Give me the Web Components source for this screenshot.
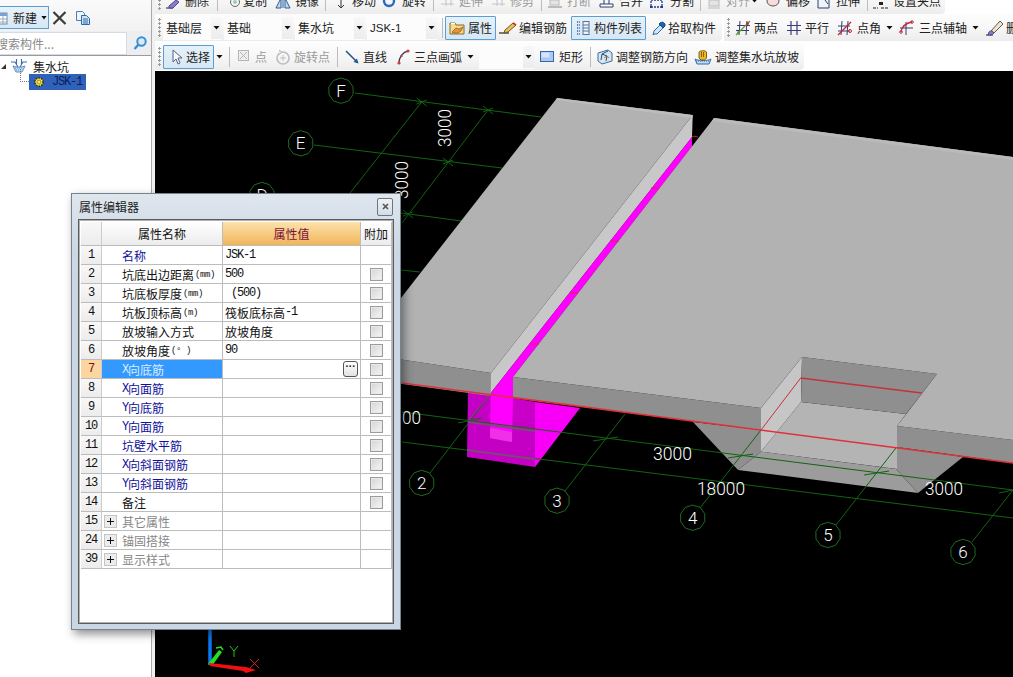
<!DOCTYPE html>
<html lang="zh"><head><meta charset="utf-8"><title>集水坑</title>
<style>
html,body{margin:0;padding:0;background:#fff;overflow:hidden}
body{font:12px "Noto Sans CJK SC","Liberation Sans",sans-serif;color:#222}
</style></head><body>
<cad-app></cad-app>
<script>
const ICONS={
 doc:'<rect x="1" y="3" width="12" height="11" fill="#fff" stroke="#6c8db5"/><rect x="1" y="3" width="12" height="3" fill="#7aa3d3"/><path d="M1 9h12M1 12h12M5 6v8M9 6v8" stroke="#9ab" fill="none"/>',
 del:'<path d="M1.500 2l12 12M13.500 2l-12 12" stroke="#3c3c3c" stroke-width="2.200" fill="none"/>',
 copy:'<path d="M1.500 1.500h6l2 2v7h-8z" fill="#eef4fb" stroke="#4a7fb5"/><path d="M6.500 5.500h5l3 3v6h-8z" fill="#cfe2f5" stroke="#2e6aa8"/><path d="M8 9h5M8 11h5M8 13h5" stroke="#2e6aa8"/>',
 search:'<circle cx="9.500" cy="6.500" r="4.200" fill="#d8eaf8" stroke="#3b8fd0" stroke-width="2"/><path d="M6.500 9.500L2.500 14" stroke="#3b8fd0" stroke-width="2.400"/>',
 pit:'<path d="M0 4h4l3 5M16 4h-4l-3 5M5.500 1v5M10.500 1v5" fill="none" stroke="#3d6db0" stroke-width="1.100"/><path d="M2 8c3 1.500 9 1.500 12 0l-3 6H5z" fill="#c8def4" stroke="#5f8cc8"/><path d="M4 10h8M5 12h6" stroke="#5f8cc8" stroke-dasharray="1 1"/>',
 gear:'<circle cx="8" cy="8" r="5.500" fill="#f4e23c" stroke="#2c2c10" stroke-dasharray="2 1.500" stroke-width="2"/><circle cx="8" cy="8" r="2.500" fill="#fdf070" stroke="#2c2c10" stroke-width=".6"/>',
 props:'<path d="M1 3h5l1 2h8v9H1z" fill="#f4d98e" stroke="#8a6a28"/><path d="M3 12l4-4 3 1 4-2-2 4-3 2H4z" fill="#e2953a" stroke="#8a5a18" stroke-width=".7"/><path d="M2 3.500h4" stroke="#fff"/>',
 edit:'<path d="M0 13h10" stroke="#222" stroke-width="1.200"/><path d="M6 10l8-7 3 2-8 7-4 1z" fill="#e8c060" stroke="#7a5518"/><path d="M14 3l3 2" stroke="#c33" stroke-width="1.600"/>',
 list:'<path d="M2 2h3M2 5h3M2 8h3M2 11h3M2 14h3" stroke="#2c5fa5" stroke-width="1.500" stroke-dasharray="1.200 1"/><rect x="8" y="1.500" width="6" height="13" fill="#eef3fa" stroke="#54749c"/><path d="M8 5h6M8 8h6M8 11h6" stroke="#54749c"/>',
 pick:'<path d="M3 14l-1 1 1-4 6-6 3 3-6 6z" fill="#cfe5f8" stroke="#2d6ab0"/><path d="M8 4l4 4 2-2 0-2-1-1-2-1-2 1z" fill="#1e63b0" stroke="#174a85"/>',
 two:'<path d="M2 5.500h13M1 10.500h13M5 1l-1 14M12 1l-1 14" stroke="#3a3a70" fill="none"/><path d="M1 15L15 1" stroke="#5c9a3a" stroke-width="1.300"/><circle cx="3.500" cy="12.500" r="1.500" fill="#5c9a3a"/><circle cx="12.500" cy="3.500" r="1.500" fill="#b33"/>',
 par:'<path d="M1 5.500h14M1 10.500h14M5 1v14M11 1v14" stroke="#3a3a80" fill="none" stroke-width="1.200"/>',
 ang:'<path d="M1 6h12M1 11h12M5 1L4 15M11 1l-1 14" stroke="#3a3a70" fill="none"/><path d="M1 15L14 2" stroke="#c0283a" stroke-width="1.200"/><circle cx="13" cy="11" r="1.500" fill="none" stroke="#c0283a"/>',
 aux:'<path d="M7 2v13M1 8h13" stroke="#3a3a70"/><path d="M2 12C3 6 7 3 13 2" fill="none" stroke="#c0283a" stroke-width="1.300"/><circle cx="2" cy="12" r="1.300" fill="none" stroke="#c0283a"/><circle cx="13" cy="2" r="1.300" fill="none" stroke="#c0283a"/>',
 brush:'<path d="M0 15h7" stroke="#222"/><path d="M5 11L14 1l3 3-9 9z" fill="#e9e4d8" stroke="#6a5a3a"/><path d="M3 12c2-2 4-1 5 1l-3 2H2z" fill="#8a78c8" stroke="#55458a"/>',
 sel:'<path d="M4 1v12l3-3 2 5 2-1-2-5h4z" fill="#f4f6fa" stroke="#59627a"/>',
 pt:'<rect x="1.500" y="1.500" width="10" height="10" fill="#eee" stroke="#b4b4b4"/><path d="M3 3l7 7M10 3l-7 7" stroke="#b4b4b4"/>',
 rot:'<circle cx="8" cy="9" r="6" fill="none" stroke="#bdbdbd" stroke-width="1.600"/><path d="M8 6v6M5 9h6" stroke="#bdbdbd"/><path d="M4 1l3 2-3 3" fill="#ddd" stroke="#bdbdbd"/>',
 line:'<path d="M1 2l11 11" stroke="#23588f" stroke-width="1.600"/><path d="M13.500 14.500l-5-1.500 3.500-3.500z" fill="#23588f"/>',
 arc:'<path d="M2 14C2 8 6 3 11 2" fill="none" stroke="#35406a" stroke-width="1.400"/><circle cx="2" cy="14" r="1.600" fill="#d04030"/><circle cx="11" cy="2" r="1.600" fill="#d04030"/><circle cx="4.500" cy="7" r="1.200" fill="#d04030"/>',
 rect:'<rect x=".5" y="2.500" width="13" height="10" fill="#a9c8f2" stroke="#3a64a8"/><rect x="1.500" y="3.500" width="8" height="5" fill="#d4e4fa"/>',
 adj:'<path d="M1 4l10-3 4 3v8l-10 3-4-3z" fill="#d9e6f2" stroke="#3d6d96"/><path d="M5 5l5 2-1 5M5 5l-1 6M11 2l-6 3" fill="none" stroke="#23507a"/><path d="M7 9c2-2 4-2 5 0" fill="none" stroke="#a06a20"/>',
 hand:'<path d="M0 10c3 2 13 2 16 0l-2 5H2z" fill="#bcd8f2" stroke="#2f6cab"/><path d="M1 12h14" stroke="#2f6cab" stroke-dasharray="1 1"/><path d="M4 9V3l1.500-1L7 2l1.500-.5L10 2l1.500 1v6l-2 2H6z" fill="#e8b82a" stroke="#85620f"/><path d="M6.500 3v5M8.500 3v5" stroke="#85620f"/>',
 r1del:'<path d="M0 7h7" stroke="#222"/><path d="M3 5l7-6 3 2-6 6H3z" fill="#8a78c8" stroke="#55458a"/>',
 r1copy:'<circle cx="5" cy="1" r="4.500" fill="none" stroke="#666"/><circle cx="5" cy="1" r="2" fill="#9cb"/>',
 r1mir:'<path d="M1 7l4-8h1v8zM15 7l-4-8h-1v8zM8 -1v8" fill="#bcd8f2" stroke="#2f5e9a"/>',
 r1mov:'<path d="M6 -1v8M3 4l3 3 3-3" stroke="#333" fill="none"/>',
 r1rot:'<circle cx="6" cy="0" r="5" fill="none" stroke="#2c6bc0" stroke-width="2.400"/>',
 r1dis:'<path d="M1 3h13M6 -1v6M11 -1v6" stroke="#c4c4c4" fill="none"/>',
 r1brk:'<path d="M0 6h14" stroke="#bbb" stroke-width="2"/><rect x="2" y="-1" width="9" height="5" fill="#e5e5e5" stroke="#bbb"/>',
 r1mrg:'<path d="M1 3h13v3H1z" fill="#fff" stroke="#2d3f6a"/><path d="M5 -1v4M10 -1v4" stroke="#2d3f6a"/>',
 r1spl:'<rect x="1" y="-1" width="11" height="7" fill="none" stroke="#1d3a9a" stroke-dasharray="2 1" stroke-width="1.300"/><rect x="0" y="5" width="2" height="2" fill="#1d3a9a"/><rect x="11" y="5" width="2" height="2" fill="#1d3a9a"/>',
 r1ali:'<rect x="1" y="-1" width="10" height="6" fill="#e4e4e4" stroke="#bbb"/><path d="M0 7h12" stroke="#bbb"/>',
 r1off:'<ellipse cx="7" cy="0" rx="6" ry="5" fill="#f6dcdc" stroke="#555"/>',
 r1str:'<path d="M1 -1v8h11V-1" fill="#eef4fb" stroke="#2d3f6a"/><path d="M8 -1l3 4" stroke="#2d3f6a"/>',
 r1grp:'<path d="M0 7h5M8 7h8" stroke="#222" stroke-dasharray="3 1"/><rect x="6" y="1" width="4" height="3" fill="#222"/>'
};
class Base extends HTMLElement{
 mount(html){if(!this.shadowRoot)this.attachShadow({mode:'open'});this.shadowRoot.innerHTML=html}
}
customElements.define('tool-grip',class extends Base{connectedCallback(){this.mount(`<style>:host{display:block;flex:none;width:5px;height:20px;background:radial-gradient(circle at 1.500px 1.500px,#9a9a9a 1px,transparent 1.200px) 0 0/5px 4px repeat-y}</style>`)}});
customElements.define('tool-sep',class extends Base{connectedCallback(){this.mount(`<style>:host{display:block;flex:none;width:1px;height:20px;background:#bcbcbc}</style>`)}});
customElements.define('tool-arrow',class extends Base{connectedCallback(){this.mount(`<style>:host{display:block;flex:none;width:7px;height:4px;background:#111;clip-path:polygon(0 0,100% 0,50% 100%)}</style>`)}});
customElements.define('tool-item',class extends Base{connectedCallback(){
 const g=n=>this.getAttribute(n);
 const iw=g('iw')||16,nm=g('i')||'',raw=ICONS[nm]||'';
 const ic=nm.startsWith('r1')?`<g transform="translate(0,8)">${raw}</g>`:raw;
 this.mount(`<style>
 :host{display:flex;flex:none;align-items:center;box-sizing:border-box;height:24px;white-space:nowrap;color:#222;font:12px "Noto Sans CJK SC",sans-serif;border:1px solid transparent}
 :host([hl]){border-color:#5a9fd4;background:linear-gradient(#e6f1f9,#d6e7f4);border-radius:1px}
 :host([dis]){color:#9a9a9a}
 svg{flex:none;display:block;overflow:visible;margin-left:-1px}
 span{margin-left:var(--gap,3px);position:relative;left:-1px}
 </style><svg width="${iw}" height="16" viewBox="0 0 ${iw} 16">${ic}</svg><span><slot></slot></span>`);
}});
customElements.define('tool-combo',class extends Base{connectedCallback(){this.mount(`<style>
 :host{display:flex;flex:none;align-items:center;box-sizing:border-box;height:24px;background:#fcfcfc;padding-left:3px;color:#222;font:12px "Noto Sans CJK SC",sans-serif;position:relative}
 b{position:absolute;right:0;top:1px;bottom:1px;width:11px;background:linear-gradient(#f8f8f8,#ececec);display:flex;align-items:center;justify-content:center}
 i{display:block;width:7px;height:4px;background:#111;clip-path:polygon(0 0,100% 0,50% 100%)}
 </style><slot></slot><b><i></i></b>`)}});
customElements.define('tool-bar',class extends Base{connectedCallback(){this.mount(`<style>
 :host{display:flex;flex:none;align-items:center;height:27px;box-sizing:border-box;padding:0 4px 0 3px;background:linear-gradient(#fdfdfd,#f6f6f6 55%,#ececec);border-radius:0 4px 4px 0}
 </style><slot></slot>`)}});
customElements.define('tool-row',class extends Base{connectedCallback(){this.mount(`<style>:host{display:flex;flex:none;gap:2px;height:27px;margin-bottom:var(--mb,2px)}</style><slot></slot>`)}});

customElements.define('left-panel',class extends Base{connectedCallback(){
 const sv=(n,w,h,st)=>`<svg width="${w}" height="${h}" viewBox="0 0 ${w} ${h}" style="${st||''}">${ICONS[n]}</svg>`;
 this.mount(`<style>
 :host{display:flex;flex-direction:column;flex:none;width:151px;height:677px;box-sizing:content-box;border-right:1px solid #a9a9a9;background:#fff;font:12px "Noto Sans CJK SC",sans-serif;color:#222;overflow:hidden}
 .top{height:27px;flex:none;padding-top:4px;display:flex;align-items:center;background:linear-gradient(#fafafa,#f2f2f2);box-sizing:content-box}
 .new{display:flex;align-items:center;width:49px;height:23px;box-sizing:border-box;border:1px solid #5a9fd4;border-left:none;background:linear-gradient(#e8f2fa,#d6e7f4);overflow:hidden}
 .new svg{flex:none;margin-left:-6px}
 .new span{margin-left:4px}
 .new i{display:block;flex:none;width:6px;height:4px;margin-left:4px;background:#111;clip-path:polygon(0 0,100% 0,50% 100%)}
 .srow{height:24px;flex:none;display:flex;align-items:center;background:#eceef2;border-bottom:1px solid #9a9a9a;overflow:hidden}
 .inp{width:127px;height:23px;flex:none;background:#fff;border:1px solid #d4dbe4;border-left:none;box-sizing:border-box;color:#8a8a8a;display:flex;align-items:center;white-space:nowrap;overflow:hidden}
 .inp span{margin-left:-4px}
 .tree{position:relative;flex:1;padding-top:2px}
 .n1{display:flex;align-items:center;height:16px}
 .tri{width:0;height:0;margin-left:1px;border-style:solid;border-width:0 0 5px 5px;border-color:transparent transparent #333 transparent}
 .n1 svg{margin-left:5px}
 .n1 span{margin-left:6px}
 .n2{display:flex;align-items:center;height:16px;margin-left:29px;width:57px;background:#2f62b8;color:#0a1f5c;font:12px "Liberation Mono",monospace;letter-spacing:-1.200px;position:relative}
 .n2 svg{margin-left:4px}
 .n2 span{margin-left:7px}
 .n2:before{content:"";position:absolute;left:-9px;top:-5px;width:8px;height:12px;border-left:1px dotted #777;border-bottom:1px dotted #777}
 </style>
 <div class="top"><div class="new">${sv('doc',15,16)}<span>新建</span><i></i></div>${sv('del',16,16,'margin-left:3px')}<svg width="16" height="16" viewBox="0 0 16 16" style="margin-left:7px">${ICONS.copy}</svg></div>
 <div class="srow"><div class="inp"><span>搜索构件...</span></div><svg width="16" height="16" viewBox="0 0 16 16" style="margin-left:5px">${ICONS.search}</svg></div>
 <div class="tree"><div class="n1"><div class="tri"></div>${sv('pit',16,16)}<span>集水坑</span></div><div class="n2">${sv('gear',16,16,'width:12px;height:12px')}<span>JSK-1</span></div></div>`);
}});

customElements.define('cad-canvas',class extends Base{connectedCallback(){
 const G='#126412';
 const circ=(x,y,t)=>`<polygon points="${Array.from({length:10},(_,i)=>{const a=Math.PI*2*i/10+.3;return (x+12.7*Math.cos(a)).toFixed(1)+','+(y+12.7*Math.sin(a)).toFixed(1)}).join(' ')}" fill="none" stroke="#226a22"/><text x="${x}" y="${y+6}" text-anchor="middle" class="lb" font-size="17">${t}</text>`;
 const l=(a,b,c,d,col,w)=>`<line x1="${a}" y1="${b}" x2="${c}" y2="${d}" stroke="${col||G}" stroke-width="${w||1}"/>`;
 const x=(a,b)=>l(a-5,b-4,a+5,b+4)+l(a-5,b+2,a+5,b-2);
 this.mount(`<style>:host{display:block;flex:1;min-height:0;background:#000;overflow:hidden}svg{display:block}
 .lb{fill:#fff;font-family:Roboto,"Liberation Sans",sans-serif;font-weight:300}</style>
 <svg width="858" height="606" viewBox="155 71 858 606">
 <rect x="155" y="71" width="858" height="606" fill="#000"/>
 ${l(355,93,541,117)}${l(314,145,502,168)}${l(280,197,462,221)}${l(260,255,420,272)}
 ${l(421.700,102,350,193)}${l(488,110,402,223)}${l(350,193,300,260)}
 ${x(421.700,102)}${x(488,110)}${x(448,162)}${x(408,214)}
 ${circ(341,90.700,'F')}${circ(300.700,143.300,'E')}${circ(262,195,'D')}
 <text class="lb" font-size="18" textLength="38" lengthAdjust="spacingAndGlyphs" transform="translate(451,147) rotate(-90)">3000</text>
 <text class="lb" font-size="18" textLength="38" lengthAdjust="spacingAndGlyphs" transform="translate(408,199) rotate(-90)">3000</text>

 <polygon points="468,392 535,402 535,467 467,457" fill="#c400c4"/>
 <polygon points="535,402 580,408 535,467" fill="#f800f8"/>
 <polygon points="490.700,395 513,398 512,442 490,438" fill="#ff00ff"/>
 <polygon points="490,428 512,432 512,442 490,438" fill="#f030e8"/>
 <polygon points="513,398 535,402 535,425 513,421" fill="#c800c8"/>

 <polygon points="358,353 491,373 491,396 358,378" fill="#8f8f8f"/>
 <polygon points="557,98 692.700,115 491,373 358,353" fill="#b2b2b2"/>
 <polygon points="557,98 692.700,115 692.500,118 556,100" fill="#bcbcbc"/>
 <polygon points="692.700,115 692,137 490.700,393 491,373" fill="#c8c8c8"/>
 <polygon points="692,137 692,146.500 513,377 513,398 490.700,395 490.700,393" fill="#ff00ff"/>

 <polygon points="693,422 761,430 761,451.700 738,470" fill="#8f8f8f"/>
 <polygon points="761,451.700 896,469 918,493 738,470" fill="#9c9c9c"/>
 <polygon points="897,447 963,457 918,493 896,469" fill="#909090"/>
 <polygon points="801,402 906,414 897,426 897,469 761,451.700" fill="#b4b4b4"/>
 <polygon points="761,408 802,357 801,402 761,451.700" fill="#c6c6c6"/>
 <polygon points="802,357 937,374 906,414 801,402" fill="#8f8f8f"/>
 <polygon points="513,377 761,408 761,430 513,398" fill="#8f8f8f"/>
 <polygon points="897,426 1013,440 1013,463 897,447" fill="#8f8f8f"/>
 <polygon points="714,118 1013,157 1013,440 897,426 937,374 802,357 761,408 513,377" fill="#b2b2b2"/>
 <polygon points="714,118 1013,157 1013,160 712,121" fill="#bababa"/>

 ${l(402,412,1013,490)}${l(402,442,1013,518)}
 ${l(430,473,490,395)}${l(565,491,625,414)}${l(700,508,761,430)}${l(836,525,896.700,447)}${l(972,542,1013,490)}
 ${l(468,422,535,431,'#7a4a7a',2)}${l(467,450,535,459,'#7a4a7a',2)}${l(468,421,490,395,'#7a4a7a')}
 ${l(458,423,482,418)}${l(593,441,618,437)}${l(728,458,753,454)}${l(864,475,889,471)}${l(999,493,1013,490)}
 ${l(402,383,1013,463,'#e0303c',1.500)}
 ${l(800.700,378,921.700,393,'#c8303c',1.500)}${l(800.700,378,761,430,'#c8303c')}
 ${l(651,188,659,188,'#e0204a')}${l(611,241,619,241,'#e0204a')}${l(570,293,578,293,'#e0204a')}${l(531,344,539,344,'#e0204a')}
 <path d="M692 137c2-1 4-1 6 0" stroke="#e02020" fill="none"/>

 ${circ(421.700,483,'2')}${circ(557,500.700,'3')}${circ(692.700,517.700,'4')}${circ(828,535,'5')}${circ(963,552,'6')}
 <text class="lb" x="402" y="424" font-size="18" textLength="19" lengthAdjust="spacingAndGlyphs">00</text>
 <text class="lb" x="653" y="460" font-size="18" textLength="39" lengthAdjust="spacingAndGlyphs">3000</text>
 <text class="lb" x="697" y="495" font-size="18" textLength="48" lengthAdjust="spacingAndGlyphs">18000</text>
 <text class="lb" x="925" y="495" font-size="18" textLength="38" lengthAdjust="spacingAndGlyphs">3000</text>

 <line x1="210" y1="630" x2="210" y2="665" stroke="#0a78f0" stroke-width="3.500"/>
 <polygon points="208,664 219,650 222,652 212,666" fill="#22e022"/>
 <path d="M216 648l5-1 2 3" fill="none" stroke="#22e022" stroke-width="1.500"/>
 <polygon points="209,663 246,667 256,670 246,673 243,671 210,666" fill="#f01010"/>
 <path d="M230 646l4 5 4-5M234 651v6" stroke="#22c022" fill="none"/>
 <path d="M250 659l9 9M259 659l-9 9" stroke="#d02020" fill="none"/>
 </svg>`);
}});

customElements.define('prop-row',class extends Base{connectedCallback(){
 const g=n=>this.getAttribute(n);
 const kind=g('k')||'';
 const active=this.hasAttribute('active');
 const head=this.hasAttribute('head');
 const name=g('name')||'',val=g('v')||'';
 const mono=/^[XY]/.test(name)?`<span class="m">${name[0]}</span>${name.slice(1)}`:name;
 const u=g('u')?`<span class="u">${g('u')}</span>`:'';
 const plus=kind==='g'?'<b class="plus"></b>':'';
 this.mount(`<style>
 :host{display:grid;grid-template-columns:21px 121px 138px 31px;height:${head?24:19}px;font:12px/18px "Noto Sans CJK SC",sans-serif;color:#111}
 .c{box-sizing:border-box;border-right:1px solid #bcbcbc;border-bottom:1px solid #bcbcbc;display:flex;align-items:center;white-space:pre;overflow:hidden;background:#fff}
 .gut{background:linear-gradient(#f8f8f8,#ececec);justify-content:center;font:12px "Liberation Mono",monospace;letter-spacing:-1.200px;border-right-color:#ccc}
 :host([active]) .gut{background:#fbd6a0;color:#7a1010}
 .nm{padding:1px 0 0 20px;color:${kind==='b'?'#10109a':kind==='g'?'#868686':'#111'}}
 :host([k=g]) .nm{padding-left:2px}
 :host([active]) .nm{background:#3399ff;color:#dcebff}
 .v{padding-left:2px;font:12px "Liberation Mono","Noto Sans CJK SC",monospace;letter-spacing:-1.200px;position:relative;justify-content:flex-start}
 .v .cj{font:12px "Noto Sans CJK SC",sans-serif;letter-spacing:0}
 .a{justify-content:center}
 .m{font:12px "Liberation Mono",monospace;letter-spacing:-1.200px}
 .u{font:9px "Liberation Mono",monospace;letter-spacing:-.4px;margin-left:1px}
 .plus{display:block;flex:none;width:13px;height:13px;margin-right:5px;box-sizing:border-box;border:1px solid #c4c4c4;background:
   linear-gradient(#111,#111) center/7px 1px no-repeat,linear-gradient(#111,#111) center/1px 7px no-repeat,#ececec}
 .cb{display:block;width:13px;height:13px;box-sizing:border-box;border:1px solid #9c9c9c;background:linear-gradient(135deg,#d4d4d4,#f6f6f6);box-shadow:inset 0 0 0 1px #e8e8e8}
 .dots{position:absolute;right:2px;top:1px;width:15px;height:16px;box-sizing:border-box;border:1px solid #555;border-radius:3px;background:linear-gradient(#fff,#e2e2e2);font:bold 10px/10px "Liberation Sans",sans-serif;color:#111;text-align:center;letter-spacing:0}
 .hd{justify-content:center;background:linear-gradient(#fff,#ececec);padding:0}
 .hv{background:linear-gradient(#fde2ab,#f0b55a);color:#7a1040}
 </style>${head?`<div class="c gut"></div><div class="c hd">属性名称</div><div class="c hd hv">属性值</div><div class="c hd">附加</div>`:
 `<div class="c gut">${g('n')}</div><div class="c nm">${plus}${mono}${u}</div><div class="c v">${/[^\x00-\x7f]/.test(val)?val.replace(/([^\x00-\x7f]+)/g,'<span class="cj">$1</span>'):val}${active?'<div class="dots">···</div>':''}</div><div class="c a">${this.hasAttribute('cb')?'<b class="cb"></b>':''}</div>`}`);
}});

customElements.define('prop-dialog',class extends Base{connectedCallback(){this.mount(`<style>
 :host{position:absolute;left:71px;top:193px;width:330px;height:437px;box-sizing:border-box;border:1px solid #76838f;background:linear-gradient(#dfe6ee,#cbd7e4 60px,#c9d6e3);box-shadow:3px 4px 9px rgba(0,0,0,.45);display:flex;flex-direction:column;font:12px "Noto Sans CJK SC",sans-serif;color:#222;z-index:5}
 .t{height:25px;flex:none;display:flex;align-items:center;justify-content:space-between;padding:0 7px 0 7px;box-sizing:border-box}
 .x{width:16px;height:18px;box-sizing:border-box;border:1px solid #6c7680;border-radius:2px;background:linear-gradient(#eef2f6,#d4dce4);display:flex;align-items:center;justify-content:center}
 .body{flex:1;margin:0 6px 5px;box-sizing:border-box;border:1px solid #5c5c5c;background:#fff;padding:0}
 .in{border:1px solid #b0b0b0;height:100%;box-sizing:border-box;padding:1px}
 </style><div class="t"><span>属性编辑器</span><div class="x"><svg width="7" height="7" viewBox="0 0 7 7"><path d="M1 1l5 5M6 1L1 6" stroke="#555" stroke-width="1.600"/></svg></div></div>
 <div class="body"><div class="in"><slot></slot></div></div>`)}});

customElements.define('cad-app',class extends Base{connectedCallback(){this.mount(`<style>
 :host{display:flex;position:relative;width:1013px;height:677px;overflow:hidden;background:#fff}
 .split{flex:none;width:3px;background:#f0f0f0}
 .main{flex:1;min-width:0;display:flex;flex-direction:column;overflow:hidden;background:#fff}
 .rows{flex:none;height:71px}
 </style>
 <left-panel></left-panel><div class="split"></div>
 <div class="main"><div class="rows">
 <tool-row style="--mb:0px;margin-top:-13px"><tool-bar>
  <tool-grip></tool-grip>
  <tool-item i="r1del" iw="13" style="margin-left:3px;width:44px;--gap:7px">删除</tool-item><tool-sep style="margin-left:7px"></tool-sep>
  <tool-item i="r1copy" iw="11" style="margin-left:12px;width:37px;--gap:3px">复制</tool-item>
  <tool-item i="r1mir" style="margin-left:8px;width:44px;--gap:5px">镜像</tool-item><tool-sep style="margin-left:6px"></tool-sep>
  <tool-item i="r1mov" iw="13" style="margin-left:9px;width:41px;--gap:5px">移动</tool-item>
  <tool-item i="r1rot" iw="13" style="margin-left:7px;width:43px;--gap:7px">旋转</tool-item><tool-sep style="margin-left:7px"></tool-sep>
  <tool-item dis i="r1dis" style="margin-left:6px;width:43px;--gap:4px">延伸</tool-item>
  <tool-item dis i="r1dis" iw="14" style="margin-left:8px;width:43px;--gap:6px">修剪</tool-item><tool-sep style="margin-left:7px"></tool-sep>
  <tool-item dis i="r1brk" iw="15" style="margin-left:6px;width:43px;--gap:5px">打断</tool-item>
  <tool-item i="r1mrg" iw="15" style="margin-left:8px;width:44px;--gap:6px">合并</tool-item>
  <tool-item i="r1spl" iw="14" style="margin-left:7px;width:44px;--gap:7px">分割</tool-item><tool-sep style="margin-left:6px"></tool-sep>
  <tool-item dis i="r1ali" iw="12" style="margin-left:7px;width:42px;--gap:7px">对齐</tool-item><tool-arrow style="margin-left:1px"></tool-arrow>
  <tool-item i="r1off" iw="14" style="margin-left:8px;width:44px;--gap:7px">偏移</tool-item>
  <tool-item i="r1str" iw="13" style="margin-left:7px;width:43px;--gap:7px">拉伸</tool-item><tool-sep style="margin-left:7px"></tool-sep>
  <tool-item i="r1grp" iw="17" style="margin-left:5px;width:68px;--gap:4px">设置夹点</tool-item>
 </tool-bar></tool-row>
 <tool-row style="--mb:2px"><tool-bar>
  <tool-grip></tool-grip>
  <tool-combo style="width:59px">基础层</tool-combo>
  <tool-combo style="margin-left:2px;width:69px">基础</tool-combo>
  <tool-combo style="margin-left:2px;width:70px">集水坑</tool-combo>
  <tool-combo style="margin-left:2px;width:70px"><span style="font:11.500px 'Liberation Sans',sans-serif">JSK-1</span></tool-combo>
  <tool-sep style="margin-left:5px"></tool-sep>
  <tool-item hl i="props" style="margin-left:2px;width:51px;padding-left:4px;--gap:4px">属性</tool-item>
  <tool-item i="edit" iw="17" style="margin-left:3px;width:69px;--gap:4px">编辑钢筋</tool-item>
  <tool-item hl i="list" style="margin-left:3px;width:75px;padding-left:4px;--gap:4px">构件列表</tool-item>
  <tool-item i="pick" iw="14" style="margin-left:4px;width:68px;padding-left:1px;--gap:4px">拾取构件</tool-item>
 </tool-bar><tool-bar>
  <tool-grip></tool-grip>
  <tool-item i="two" iw="15" style="margin-left:3px;width:44px;--gap:5px">两点</tool-item>
  <tool-item i="par" iw="15" style="margin-left:7px;width:44px;--gap:5px">平行</tool-item>
  <tool-item i="ang" style="margin-left:7px;width:45px;--gap:5px">点角</tool-item><tool-arrow style="margin-left:4px"></tool-arrow>
  <tool-item i="aux" iw="15" style="margin-left:6px;width:69px;--gap:6px">三点辅轴</tool-item><tool-arrow style="margin-left:4px"></tool-arrow>
  <tool-item i="brush" iw="17" style="margin-left:7px;width:50px;--gap:4px">删除</tool-item>
 </tool-bar></tool-row>
 <tool-row style="--mb:0"><tool-bar style="padding-right:5px">
  <tool-grip></tool-grip>
  <tool-item hl i="sel" style="width:51px;padding-left:6px;--gap:2px">选择</tool-item><tool-arrow style="margin-left:2px"></tool-arrow>
  <tool-sep style="margin-left:6px"></tool-sep>
  <tool-item dis i="pt" iw="12" style="margin-left:7px;width:30px;--gap:7px">点</tool-item>
  <tool-item dis i="rot" style="margin-left:8px;width:55px;--gap:4px">旋转点</tool-item>
  <tool-sep style="margin-left:7px"></tool-sep>
  <tool-item i="line" iw="14" style="margin-left:7px;width:42px;--gap:5px">直线</tool-item>
  <tool-item i="arc" iw="13" style="margin-left:10px;width:65px;--gap:5px">三点画弧</tool-item><tool-arrow style="margin-left:5px"></tool-arrow>
  <tool-combo style="margin-left:5px;width:55px"></tool-combo>
  <tool-item i="rect" iw="14" style="margin-left:6px;width:43px;--gap:6px">矩形</tool-item>
  <tool-sep style="margin-left:7px"></tool-sep>
  <tool-item i="adj" style="margin-left:6px;width:91px;--gap:4px">调整钢筋方向</tool-item>
  <tool-item i="hand" style="margin-left:7px;width:104px;--gap:5px">调整集水坑放坡</tool-item>
 </tool-bar></tool-row>
 </div><cad-canvas></cad-canvas></div>
 <prop-dialog>
  <prop-row head></prop-row>
  <prop-row n="1" k="b" name="名称" v="JSK-1"></prop-row>
  <prop-row n="2" name="坑底出边距离" u="(mm)" v="500" cb></prop-row>
  <prop-row n="3" name="坑底板厚度" u="(mm)" v=" (500)" cb></prop-row>
  <prop-row n="4" name="坑板顶标高" u="(m)" v="筏板底标高-1" cb></prop-row>
  <prop-row n="5" name="放坡输入方式" v="放坡角度" cb></prop-row>
  <prop-row n="6" name="放坡角度" u="(° )" v="90" cb></prop-row>
  <prop-row n="7" k="b" name="X向底筋" active cb></prop-row>
  <prop-row n="8" k="b" name="X向面筋" cb></prop-row>
  <prop-row n="9" k="b" name="Y向底筋" cb></prop-row>
  <prop-row n="10" k="b" name="Y向面筋" cb></prop-row>
  <prop-row n="11" k="b" name="坑壁水平筋" cb></prop-row>
  <prop-row n="12" k="b" name="X向斜面钢筋" cb></prop-row>
  <prop-row n="13" k="b" name="Y向斜面钢筋" cb></prop-row>
  <prop-row n="14" name="备注" cb></prop-row>
  <prop-row n="15" k="g" name="其它属性"></prop-row>
  <prop-row n="24" k="g" name="锚固搭接"></prop-row>
  <prop-row n="39" k="g" name="显示样式"></prop-row>
 </prop-dialog>`)}});
</script></body></html>
